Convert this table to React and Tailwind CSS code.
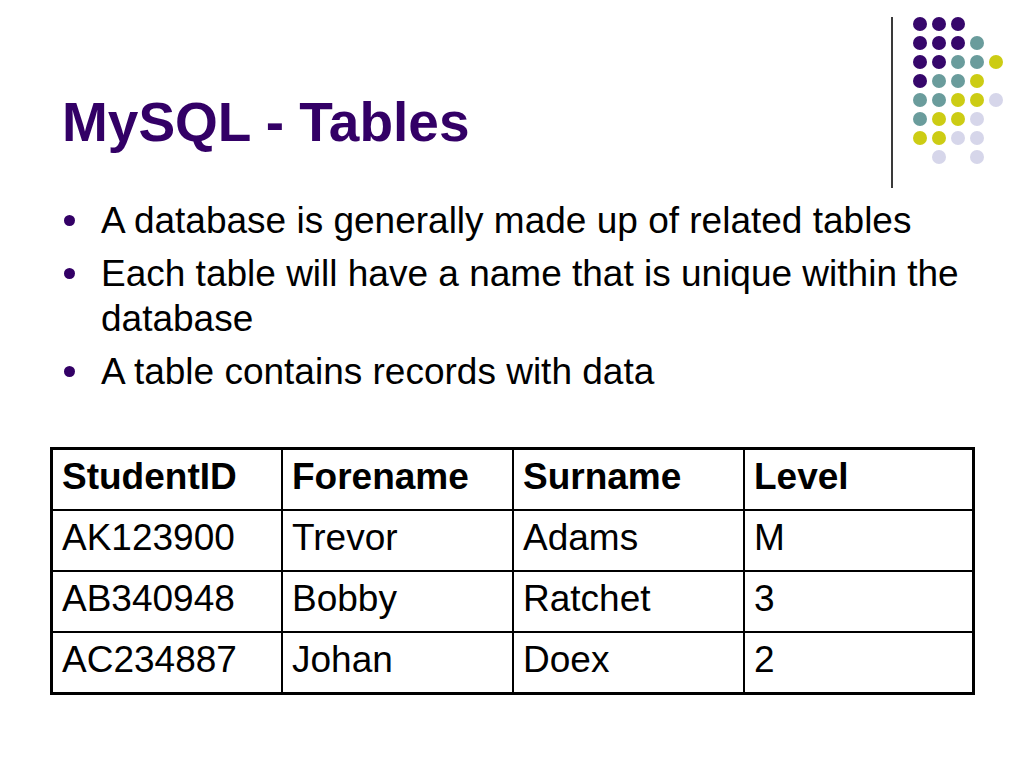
import React from 'react';

const P = 'bg-[#36076b]';
const T = 'bg-[#6a9c9c]';
const Y = 'bg-[#cccc14]';
const L = 'bg-[#d6d6ea]';

const dotRows = [
    [P, P, P, null, null],
    [P, P, P, T, null],
    [P, P, T, T, Y],
    [P, T, T, Y, null],
    [T, T, Y, Y, L],
    [T, Y, Y, L, null],
    [Y, Y, L, L, null],
    [null, L, null, L, null],
];

const bullets = [
    ['A database is generally made up of related tables'],
    ['Each table will have a name that is unique within the', 'database'],
    ['A table contains records with data'],
];

const rows = [
    ['StudentID', 'Forename', 'Surname', 'Level'],
    ['AK123900', 'Trevor', 'Adams', 'M'],
    ['AB340948', 'Bobby', 'Ratchet', '3'],
    ['AC234887', 'Johan', 'Doex', '2'],
];

export default function App() {
    return (
        <div className="w-[1024px] h-[768px] bg-white overflow-hidden flex flex-col" style={{ fontFamily: '"Liberation Sans", Arial, sans-serif' }}>
            {/* Header: title + decoration */}
            <div className="flex items-start">
                <h1 className="pt-[95px] pl-[62px] text-[55px] leading-none font-bold text-[#330066]">MySQL - Tables</h1>
                <div className="ml-auto pt-[17px] pr-[21px] flex items-start gap-[20px]">
                    <div className="w-[2px] h-[171px] bg-[#3a3a3a]" />
                    <div className="grid grid-cols-5 gap-[5px]">
                        {dotRows.flat().map((c, i) => (
                            <div key={i} className={`w-[14px] h-[14px] rounded-full ${c || ''}`} />
                        ))}
                    </div>
                </div>
            </div>

            {/* Bullets */}
            <ul className="mt-[10px] pl-[101px] text-[37px] leading-[45px] text-black">
                {bullets.map((b, i) => (
                    <li key={i} className={`flex ${i > 0 ? 'mt-[8px]' : ''}`}>
                        <div className="-ml-[37px] w-[37px] shrink-0 pt-[17px]">
                            <div className="w-[11px] h-[11px] rounded-full bg-[#330066]" />
                        </div>
                        <div>
                            {b.map((line, j) => <div key={j}>{line}</div>)}
                        </div>
                    </li>
                ))}
            </ul>

            {/* Table */}
            <div className="mt-[53px] ml-[50px] w-[925px] border-[3px] border-black">
                {rows.map((r, i) => (
                    <div key={i} className={`grid grid-cols-[228px_231px_231px_1fr] ${i > 0 ? 'border-t-[2px] border-black' : ''}`}>
                        {r.map((cell, j) => (
                            <div key={j} className={`h-[59px] flex items-center pb-[6px] text-[37px] ${j > 0 ? 'pl-[9px] border-l-[2px] border-black' : 'pl-[9px]'} ${i === 0 ? 'font-bold' : ''}`}>
                                {cell}
                            </div>
                        ))}
                    </div>
                ))}
            </div>
        </div>
    );
}
